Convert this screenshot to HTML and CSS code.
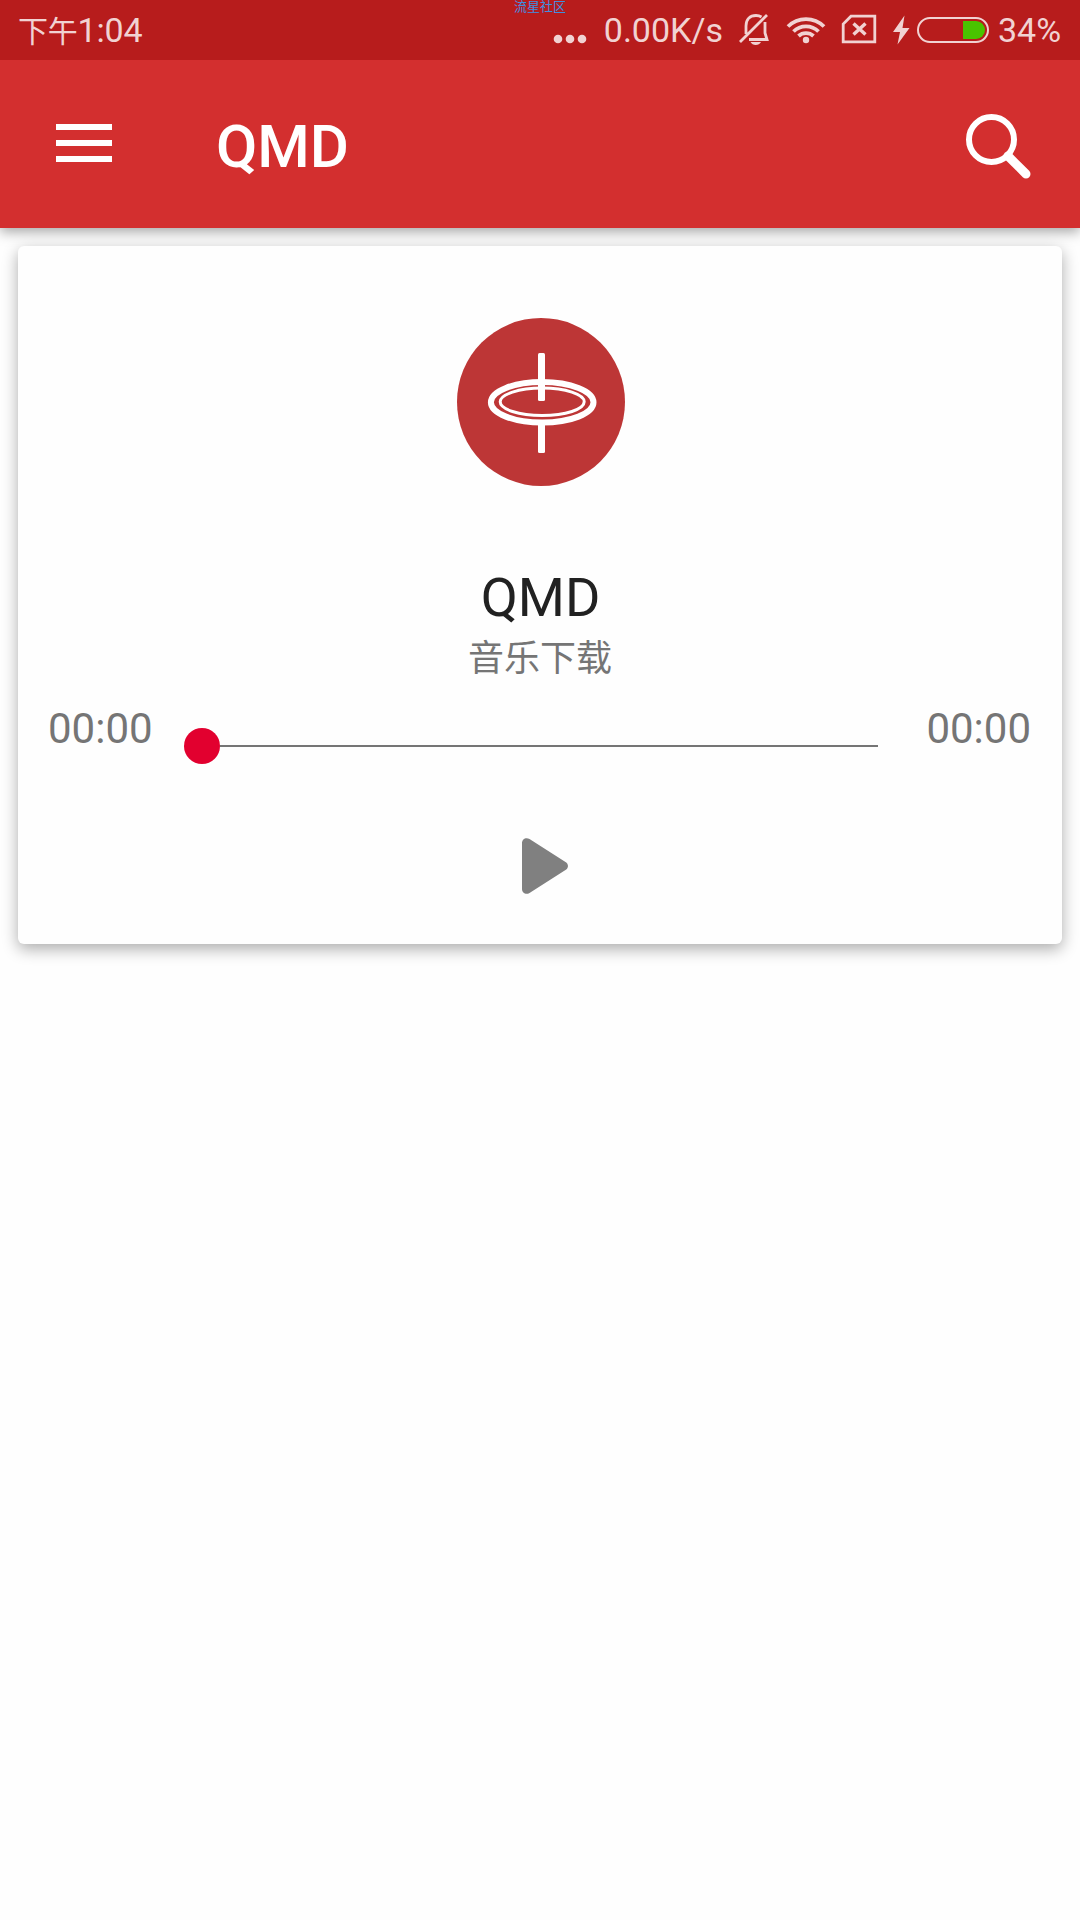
FILE: index.html
```
<!DOCTYPE html>
<html lang="zh-CN">
<head>
    <meta charset="UTF-8">
    <meta name="viewport" content="width=device-width, initial-scale=1.0">
    <title>QMD</title>
    <link rel="stylesheet" href="styles.css">
</head>
<body>
    <div class="status-bar">
        <span class="clock"><span class="period">下午</span>1:04</span>
        <span class="watermark">流星社区</span>
        <div class="status-icons">
            <svg class="dots" width="34" height="60" viewBox="553 0 34 60">
                <circle cx="558" cy="39" r="4.3"/>
                <circle cx="570" cy="39" r="4.3"/>
                <circle cx="582" cy="39" r="4.3"/>
            </svg>
            <span class="speed">0.00K/s</span>
            <svg class="bell" width="32" height="60" viewBox="738 0 32 60">
                <path class="line" d="M746 34V26C746 19 750 15.5 756 15.5C758 15.5 760 16 761.5 17M765 22V33L767 39.5H749M740 42L767 15"/>
                <path d="M750.5 42H761C760 44 758 45 755.7 45C753.5 45 751.5 44 750.5 42Z"/>
            </svg>
            <svg class="wifi" width="40" height="60" viewBox="786 0 40 60">
                <path class="arc" d="M788 26.5A25.5 25.5 0 0 1 824 26.5M793.5 31.5A18 18 0 0 1 818.5 31.5M798.5 36A11 11 0 0 1 813.5 36"/>
                <circle cx="806" cy="40" r="3.2"/>
            </svg>
            <svg class="sim" width="36" height="60" viewBox="841 0 36 60">
                <path class="line" d="M851 16.2H874.8V41.8H843.2V24Z"/>
                <path class="line cross" d="M853.5 23.5L865.5 34.5M865.5 23.5L853.5 34.5"/>
            </svg>
            <svg class="bolt" width="17" height="60" viewBox="893 0 17 60">
                <path d="M904.5 15.5L893 32H900L897.5 44.5L909.5 28H902.5Z"/>
            </svg>
            <svg class="battery" width="72" height="60" viewBox="917 0 72 60">
                <rect class="shell" x="918" y="18" width="70" height="24" rx="12"/>
                <path class="charge" d="M963 21H976A9 9 0 0 1 976 39H963Z"/>
            </svg>
            <span class="percent">34%</span>
        </div>
    </div>

    <header class="app-bar">
        <svg class="menu-icon" width="56" height="38" viewBox="0 0 56 38">
            <path d="M0 0H56V6H0ZM0 16H56V22H0ZM0 32H56V38H0Z"/>
        </svg>
        <h1>QMD</h1>
        <svg class="search-icon" width="66" height="66" viewBox="0 0 66 66">
            <circle cx="25.5" cy="25.5" r="22.5"/>
            <path d="M42 42L60 60"/>
        </svg>
    </header>

    <main class="card">
        <svg class="logo" width="168" height="168" viewBox="0 0 168 168">
            <circle class="disc" cx="84" cy="84" r="84"/>
            <ellipse class="ring-outer" cx="85.2" cy="84.3" rx="51.3" ry="20.3"/>
            <ellipse class="ring-inner" cx="85.2" cy="83.8" rx="42" ry="13.7"/>
            <rect class="rod" x="81" y="35" width="7" height="48" rx="1.5"/>
            <rect class="rod" x="81" y="104" width="7" height="31" rx="1.5"/>
        </svg>
        <h2>QMD</h2>
        <p class="subtitle">音乐下载</p>
        <div class="player">
            <span class="time">00:00</span>
            <div class="slider">
                <span class="thumb"></span>
                <span class="track"></span>
            </div>
            <span class="time">00:00</span>
        </div>
        <svg class="play" width="46" height="56" viewBox="0 0 46 56">
            <path d="M0 5C0 1 4 -1.2 7.5 1L43.5 24C46.8 26 46.8 30 43.5 32L7.5 55C4 57.2 0 55 0 51Z"/>
        </svg>
    </main>
</body>
</html>
```

FILE: styles.css
```
* {
    box-sizing: border-box;
}
body {
    margin: 0;
    min-height: 1920px;
    background-color: #fefefe;
    font-family: Roboto, "Noto Sans CJK SC", sans-serif;
}
h1, h2, p {
    margin: 0;
}
svg {
    display: block;
    flex-shrink: 0;
}

/* status bar */
.status-bar {
    position: relative;
    z-index: 1;
    display: flex;
    justify-content: space-between;
    height: 60px;
    padding: 0 18px;
    background-color: #b71c1c;
    color: #f1d2d2;
    font-size: 34px;
    line-height: 61px;
    white-space: nowrap;
}
.clock {
    letter-spacing: -0.2px;
}
.period {
    font-size: 30px;
}
.watermark {
    position: absolute;
    top: 0;
    left: 514px;
    font-size: 13px;
    line-height: 13px;
    color: #3f8fe0;
}
.status-icons {
    display: flex;
    fill: #f1d2d2;
}
.speed {
    margin: 0 15px 0 17px;
}
.wifi {
    margin-left: 16px;
}
.sim {
    margin-left: 15px;
}
.bolt {
    margin-left: 16px;
}
.battery {
    margin-left: 7px;
}
.percent {
    width: 64px;
    margin-left: 9px;
}
.line, .arc, .shell {
    fill: none;
    stroke: #f1d2d2;
    stroke-width: 2.8;
}
.arc {
    stroke-width: 3.8;
}
.cross {
    stroke-width: 3.4;
}
.shell {
    stroke-width: 2;
}
.charge {
    fill: #49c400;
}

/* app bar */
.app-bar {
    display: flex;
    align-items: center;
    height: 168px;
    padding: 0 48px 0 56px;
    background-color: #d32f2f;
    box-shadow: 0 4px 12px rgba(0, 0, 0, 0.35);
    color: #fff;
}
.menu-icon {
    margin-bottom: 2px;
    fill: #fff;
}
.app-bar h1 {
    margin-left: 104px;
    padding-top: 5px;
    font-size: 60px;
    font-weight: 500;
    line-height: 70px;
}
.search-icon {
    margin-left: auto;
    margin-top: 6px;
    fill: none;
    stroke: #fff;
    stroke-width: 6;
}
.search-icon path {
    stroke-width: 9;
    stroke-linecap: round;
}

/* player card */
.card {
    display: flex;
    flex-direction: column;
    align-items: center;
    height: 698px;
    margin: 18px;
    padding-top: 72px;
    border-radius: 6px;
    background-color: #fefefe;
    box-shadow: 0 5px 16px rgba(0, 0, 0, 0.33);
}
.logo {
    margin-left: 2px;
}
.disc {
    fill: #bd3636;
}
.ring-outer, .ring-inner {
    fill: none;
    stroke: #fff;
    stroke-width: 6;
}
.ring-inner {
    stroke-width: 3;
}
.rod {
    fill: #fff;
}
.card h2 {
    margin-top: 80px;
    padding-left: 1px;
    font-size: 54px;
    font-weight: 400;
    line-height: 64px;
    color: #212121;
}
.subtitle {
    margin-top: 8px;
    font-size: 36px;
    line-height: 42px;
    color: #757575;
}
.player {
    display: flex;
    align-self: stretch;
    height: 60px;
    margin-top: 24px;
    padding: 0 31px 0 30px;
}
.time {
    font-size: 42px;
    line-height: 50px;
    color: #757575;
}
.slider {
    display: flex;
    flex: 1;
    align-items: center;
    height: 36px;
    margin: 24px 48px 0 31px;
}
.thumb {
    width: 36px;
    height: 36px;
    border-radius: 50%;
    background-color: #e2002f;
}
.track {
    flex: 1;
    height: 2px;
    background-color: #757575;
}
.play {
    margin: 74px 0 0 10px;
    fill: #808080;
}
```
